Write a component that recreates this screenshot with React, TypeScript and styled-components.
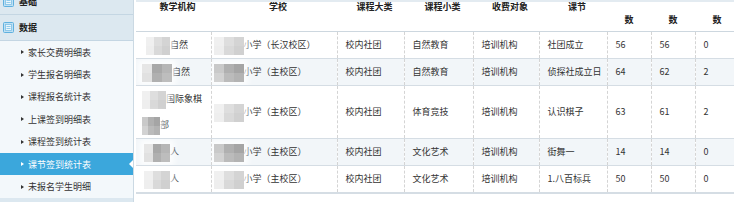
import React from 'react';
import styled, { createGlobalStyle } from 'styled-components';

const Global = createGlobalStyle`
  html, body { margin: 0; padding: 0; background: #fff; }
  body {
    font-family: "Noto Sans CJK SC", "Microsoft YaHei", sans-serif;
    font-size: 9px;
    color: #333;
    overflow: hidden;
  }
`;

const Page = styled.div`
  display: flex;
  align-items: flex-start;
  width: 734px;
  height: 202px;
  overflow: hidden;
`;

const Sidebar = styled.nav`
  flex: none;
  width: 133px;
  margin-top: -11px;
  height: 230px;
  border-right: 1px solid #cbd9e3;
  background: #f3f8fb;
`;

const SectionHead = styled.div`
  height: 25px;
  display: flex;
  align-items: center;
  gap: 5px;
  padding-left: 3px;
  background: #dce8f0;
  border-bottom: 1px solid #c4d6e3;
  font-weight: bold;
  color: #222;
`;

const Item = styled.div<{ $active?: boolean }>`
  position: relative;
  height: 22.4px;
  display: flex;
  align-items: center;
  padding-left: 21px;
  background: ${(p) => (p.$active ? '#3ba7dc' : 'transparent')};
  color: ${(p) => (p.$active ? '#fff' : '#333')};
  &::before {
    content: '';
    width: 0;
    height: 0;
    border-left: 3px solid currentColor;
    border-top: 2.5px solid transparent;
    border-bottom: 2.5px solid transparent;
    margin-right: 4px;
  }
  ${(p) =>
    p.$active &&
    `&::after {
      content: '';
      position: absolute;
      right: 0;
      top: 50%;
      margin-top: -4px;
      border-right: 4px solid #fff;
      border-top: 4px solid transparent;
      border-bottom: 4px solid transparent;
    }`}
`;

const HeadIcon = () => (
  <svg width="11" height="11" viewBox="0 0 11 11">
    <rect x="0.5" y="0.5" width="10" height="10" rx="1" fill="#bfe0f3" stroke="#5fb0df" />
    <rect x="2.5" y="2.5" width="6" height="6" fill="#eaf6fc" stroke="#7cc0e6" strokeWidth="0.8" />
    <line x1="3.5" y1="4.5" x2="7.5" y2="4.5" stroke="#7cc0e6" strokeWidth="0.8" />
    <line x1="3.5" y1="6.5" x2="7.5" y2="6.5" stroke="#7cc0e6" strokeWidth="0.8" />
  </svg>
);

const TableArea = styled.div`
  flex: none;
  width: 598px;
  height: 202px;
  margin-left: 2px;
  overflow: hidden;
  border-top: 2px solid #e3ebf1;
  box-sizing: border-box;
`;

const Table = styled.table`
  border-collapse: collapse;
  table-layout: fixed;
  width: 603px;
`;

const Th = styled.th<{ $low?: boolean }>`
  height: 29px;
  padding: 0 0 0 ${(p) => (p.$low ? 0 : 8)}px;
  vertical-align: top;
  line-height: 10px;
  font-weight: bold;
  color: #222;
  text-align: center;
  border-bottom: 1px solid #cdd7df;
  background: #fff;
`;

const ThLow = styled.span`
  display: block;
  margin-top: 13px;
`;

const Tr = styled.tr<{ $alt?: boolean; $foot?: boolean }>`
  background: ${(p) => (p.$foot ? '#e7ecf0' : p.$alt ? '#f2f6f9' : '#fff')};
`;

const Td = styled.td`
  padding: 0 8px;
  line-height: 26px;
  vertical-align: middle;
  white-space: nowrap;
  overflow: hidden;
  color: #333;
  border-left: 1px dashed #d4d4d4;
  border-bottom: 1px solid #d5dde4;
  &:first-child { border-left: none; }
`;

const MaskGrid = styled.span<{ $w: number; $shift: number }>`
  display: inline-grid;
  grid-template-columns: repeat(3, 1fr);
  width: ${(p) => p.$w}px;
  height: 18px;
  margin-left: ${(p) => p.$shift}px;
  vertical-align: middle;
  filter: blur(0.6px);
  box-shadow: 0 0 6px 4px rgba(255, 255, 255, 0.8);
`;

const Px = styled.span<{ $c: string }>`
  background: ${(p) => p.$c};
`;

const Mask = ({ w, shift = 0, c }: { w: number; shift?: number; c: string[] }) => (
  <MaskGrid $w={w} $shift={shift}>
    {c.map((col, i) => (
      <Px key={i} $c={col} />
    ))}
  </MaskGrid>
);

const light = ['#f0f0f0', '#dedede', '#d4d4d4', '#eeeeee', '#d9d9d9', '#d0d0d0'];
const dark = ['#e6e6e6', '#a8a8a8', '#b6b6b6', '#e1e1e1', '#b0b0b0', '#bdbdbd'];
const mid = ['#c9c9c9', '#b0b0b0', '#a5a5a5', '#d2d2d2', '#bbbbbb', '#b3b3b3'];

const cols = [75, 126, 67, 69, 66, 68, 44, 44, 44];

const menu = ['家长交费明细表', '学生报名明细表', '课程报名统计表', '上课签到明细表', '课程签到统计表', '课节签到统计表', '未报名学生明细'];

type Row = {
  org: React.ReactNode;
  school: React.ReactNode;
  sub: string;
  lesson: string;
  n: [string, string, string];
};

const rows: Row[] = [
  {
    org: <><Mask w={24} shift={2} c={light} />自然</>,
    school: <><Mask w={30} shift={-6} c={light} />小学（长汉校区）</>,
    sub: '自然教育', lesson: '社团成立', n: ['56', '56', '0'],
  },
  {
    org: <><Mask w={30} shift={-2} c={dark} />自然</>,
    school: <><Mask w={30} shift={-6} c={mid} />小学（主校区）</>,
    sub: '自然教育', lesson: '侦探社成立日', n: ['64', '62', '2'],
  },
  {
    org: <><Mask w={24} shift={-2} c={light} />国际象棋<br /><Mask w={18} shift={-2} c={mid} />部</>,
    school: <><Mask w={30} shift={-6} c={light} />小学（主校区）</>,
    sub: '体育竞技', lesson: '认识棋子', n: ['63', '61', '2'],
  },
  {
    org: <><Mask w={26} shift={0} c={dark} />人</>,
    school: <><Mask w={30} shift={-6} c={mid} />小学（主校区）</>,
    sub: '文化艺术', lesson: '街舞一', n: ['14', '14', '0'],
  },
  {
    org: <><Mask w={26} shift={0} c={light} />人</>,
    school: <><Mask w={30} shift={-6} c={light} />小学（主校区）</>,
    sub: '文化艺术', lesson: '1.八百标兵', n: ['50', '50', '0'],
  },
];

export default function App() {
  return (
    <>
      <Global />
      <Page>
        <Sidebar>
          <SectionHead>
            <HeadIcon />
            基础
          </SectionHead>
          <SectionHead>
            <HeadIcon />
            数据
          </SectionHead>
          {menu.map((m, i) => (
            <Item key={m} $active={i === 5}>
              {m}
            </Item>
          ))}
          <SectionHead />
        </Sidebar>
        <TableArea>
          <Table>
            <colgroup>
              {cols.map((w, i) => (
                <col key={i} style={{ width: w }} />
              ))}
            </colgroup>
            <thead>
              <tr>
                <Th>教学机构</Th>
                <Th>学校</Th>
                <Th>课程大类</Th>
                <Th>课程小类</Th>
                <Th>收费对象</Th>
                <Th>课节</Th>
                <Th $low><ThLow>数</ThLow></Th>
                <Th $low><ThLow>数</ThLow></Th>
                <Th $low><ThLow>数</ThLow></Th>
              </tr>
            </thead>
            <tbody>
              {rows.map((r, i) => (
                <Tr key={i} $alt={i % 2 === 1}>
                  <Td>{r.org}</Td>
                  <Td>{r.school}</Td>
                  <Td>校内社团</Td>
                  <Td>{r.sub}</Td>
                  <Td>培训机构</Td>
                  <Td>{r.lesson}</Td>
                  <Td>{r.n[0]}</Td>
                  <Td>{r.n[1]}</Td>
                  <Td>{r.n[2]}</Td>
                </Tr>
              ))}
              <Tr $foot>
                <Td />
                <Td />
                <Td />
                <Td />
                <Td />
                <Td />
                <Td />
                <Td />
                <Td />
              </Tr>
            </tbody>
          </Table>
        </TableArea>
      </Page>
    </>
  );
}
